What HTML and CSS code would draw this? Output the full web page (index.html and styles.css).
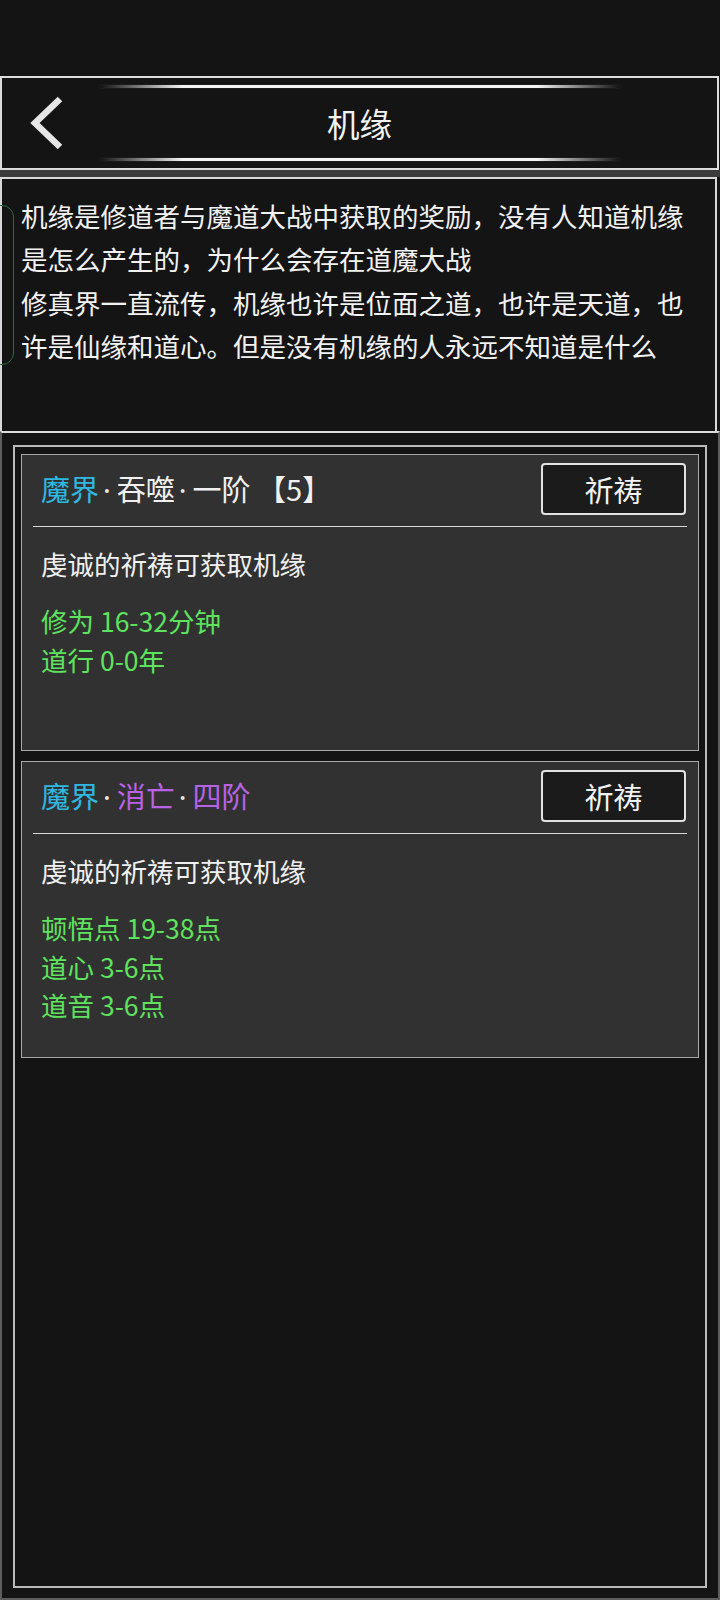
FILE: index.html
```html
<!DOCTYPE html>
<html lang="zh-CN">
<head>
<meta charset="utf-8">
<title>机缘</title>
<link rel="stylesheet" href="styles.css">
</head>
<body>
<div class="page">
  <div class="status"></div>
  <header class="topbar">
    <div class="deco"></div>
    <div class="bar-row">
      <button class="back" aria-label="返回">
        <svg viewBox="0 0 40 56" width="40" height="56"><polyline points="33,4 8,28 33,52" fill="none" stroke="#e6e6e6" stroke-width="6.5" stroke-linejoin="miter"/></svg>
      </button>
      <h1 class="title">机缘</h1>
      <span class="spacer"></span>
    </div>
    <div class="deco"></div>
  </header>
  <div class="band"></div>
  <section class="intro">
    <div class="side-tab"></div>
    <p>机缘是修道者与魔道大战中获取的奖励，没有人知道机缘是怎么产生的，为什么会存在道魔大战<br>修真界一直流传，机缘也许是位面之道，也许是天道，也许是仙缘和道心。但是没有机缘的人永远不知道是什么</p>
  </section>
  <section class="list">
    <div class="list-inner">
      <article class="card">
        <div class="card-head">
          <div class="card-title"><span class="cyan">魔界</span><span class="dot">·</span>吞噬<span class="dot">·</span>一阶 【5】</div>
          <button class="pray">祈祷</button>
        </div>
        <div class="divider"></div>
        <div class="card-body">
          <p class="card-desc">虔诚的祈祷可获取机缘</p>
          <ul class="gains">
            <li>修为 16-32分钟</li>
            <li>道行 0-0年</li>
          </ul>
        </div>
      </article>
      <article class="card">
        <div class="card-head">
          <div class="card-title"><span class="cyan">魔界</span><span class="dot">·</span><span class="purple">消亡</span><span class="dot">·</span><span class="purple">四阶</span></div>
          <button class="pray">祈祷</button>
        </div>
        <div class="divider"></div>
        <div class="card-body">
          <p class="card-desc">虔诚的祈祷可获取机缘</p>
          <ul class="gains">
            <li>顿悟点 19-38点</li>
            <li>道心 3-6点</li>
            <li>道音 3-6点</li>
          </ul>
        </div>
      </article>
    </div>
  </section>
</div>
</body>
</html>
```

FILE: styles.css
```css
* { box-sizing: border-box; }
html, body { margin: 0; padding: 0; background: #141414; }
body {
  font-family: "Noto Sans CJK SC", "Noto Sans", sans-serif;
  color: #f0f0f0;
}
.page {
  width: 720px;
  height: 1600px;
  display: flex;
  flex-direction: column;
  overflow: hidden;
}
.status { height: 76px; flex: none; }

.topbar {
  flex: none;
  height: 94px;
  margin-right: 1px;
  border: 2px solid #dcdcdc;
  padding: 7px 0 0;
  display: flex;
  flex-direction: column;
}
.deco {
  flex: none;
  width: 520px;
  height: 3px;
  margin: 0 auto;
  background: linear-gradient(90deg,
    rgba(255,255,255,0) 0%,
    rgba(255,255,255,0.35) 6%,
    #f4f4f4 16%,
    #f4f4f4 84%,
    rgba(255,255,255,0.35) 94%,
    rgba(255,255,255,0) 100%);
  box-shadow: 0 0 1px rgba(160,160,160,0.6);
}
.bar-row {
  height: 70px;
  display: grid;
  grid-template-columns: 1fr auto 1fr;
  align-items: center;
}
.back {
  justify-self: start;
  margin-left: 25px;
  padding: 0;
  border: 0;
  background: none;
  width: 40px;
  height: 56px;
  display: block;
}
.back svg { display: block; }
.title {
  margin: 0;
  font-size: 32.5px;
  font-weight: 400;
  line-height: 1;
  color: #f2f2f2;
}

.band { flex: none; height: 7px; background: #3b3b3b; }

.intro {
  flex: none;
  position: relative;
  height: 254px;
  margin-right: 3px;
  border: 2px solid #d8d8d8;
  border-bottom: none;
  padding: 15px 19px 0;
}
.intro p {
  margin: 0;
  font-size: 26.5px;
  line-height: 43.3px;
  color: #f2f2f2;
}
.side-tab {
  position: absolute;
  left: -16px;
  top: 26px;
  width: 28px;
  height: 160px;
  border: 1px solid #2f6a42;
  border-radius: 12px;
}

.list {
  flex: 1;
  display: flex;
  flex-direction: column;
  border: 2px solid #5e5e5e;
  border-top-color: #dcdcdc;
  padding: 12px 11px 10px 11px;
}
.list-inner {
  flex: 1;
  display: flex;
  flex-direction: column;
  gap: 10px;
  border: 2px solid #bababa;
  padding: 7px 6px;
}
.card {
  flex: none;
  height: 297px;
  background: #313131;
  border: 1px solid #a8a8a8;
}
.card-head {
  display: flex;
  align-items: center;
  justify-content: space-between;
  padding: 8px 12px 11px 19px;
}
.card-title {
  font-size: 29px;
  line-height: 1.2;
  color: #f0f0f0;
  white-space: nowrap;
}
.dot {
  font-family: "Noto Sans", "DejaVu Sans", sans-serif;
  color: #e8e8e8;
  margin: 0 6px 0 4px;
}
.cyan { color: #2fb8e0; }
.purple { color: #b862e6; }
.pray {
  width: 145px;
  height: 52px;
  padding: 0;
  background: #1b1b1b;
  border: 2px solid #e2e2e2;
  border-radius: 4px;
  color: #f2f2f2;
  font-family: inherit;
  font-size: 29px;
  line-height: 1;
}
.divider {
  height: 1px;
  margin: 0 11px;
  background: #d8d8d8;
}
.card-body { padding: 18px 19px 0; }
.card-desc {
  margin: 0;
  font-size: 26.5px;
  line-height: 38px;
  color: #f0f0f0;
}
.gains {
  list-style: none;
  margin: 19px 0 0;
  padding: 0;
  font-size: 26.5px;
  line-height: 38.5px;
  color: #5ee35e;
}
```
